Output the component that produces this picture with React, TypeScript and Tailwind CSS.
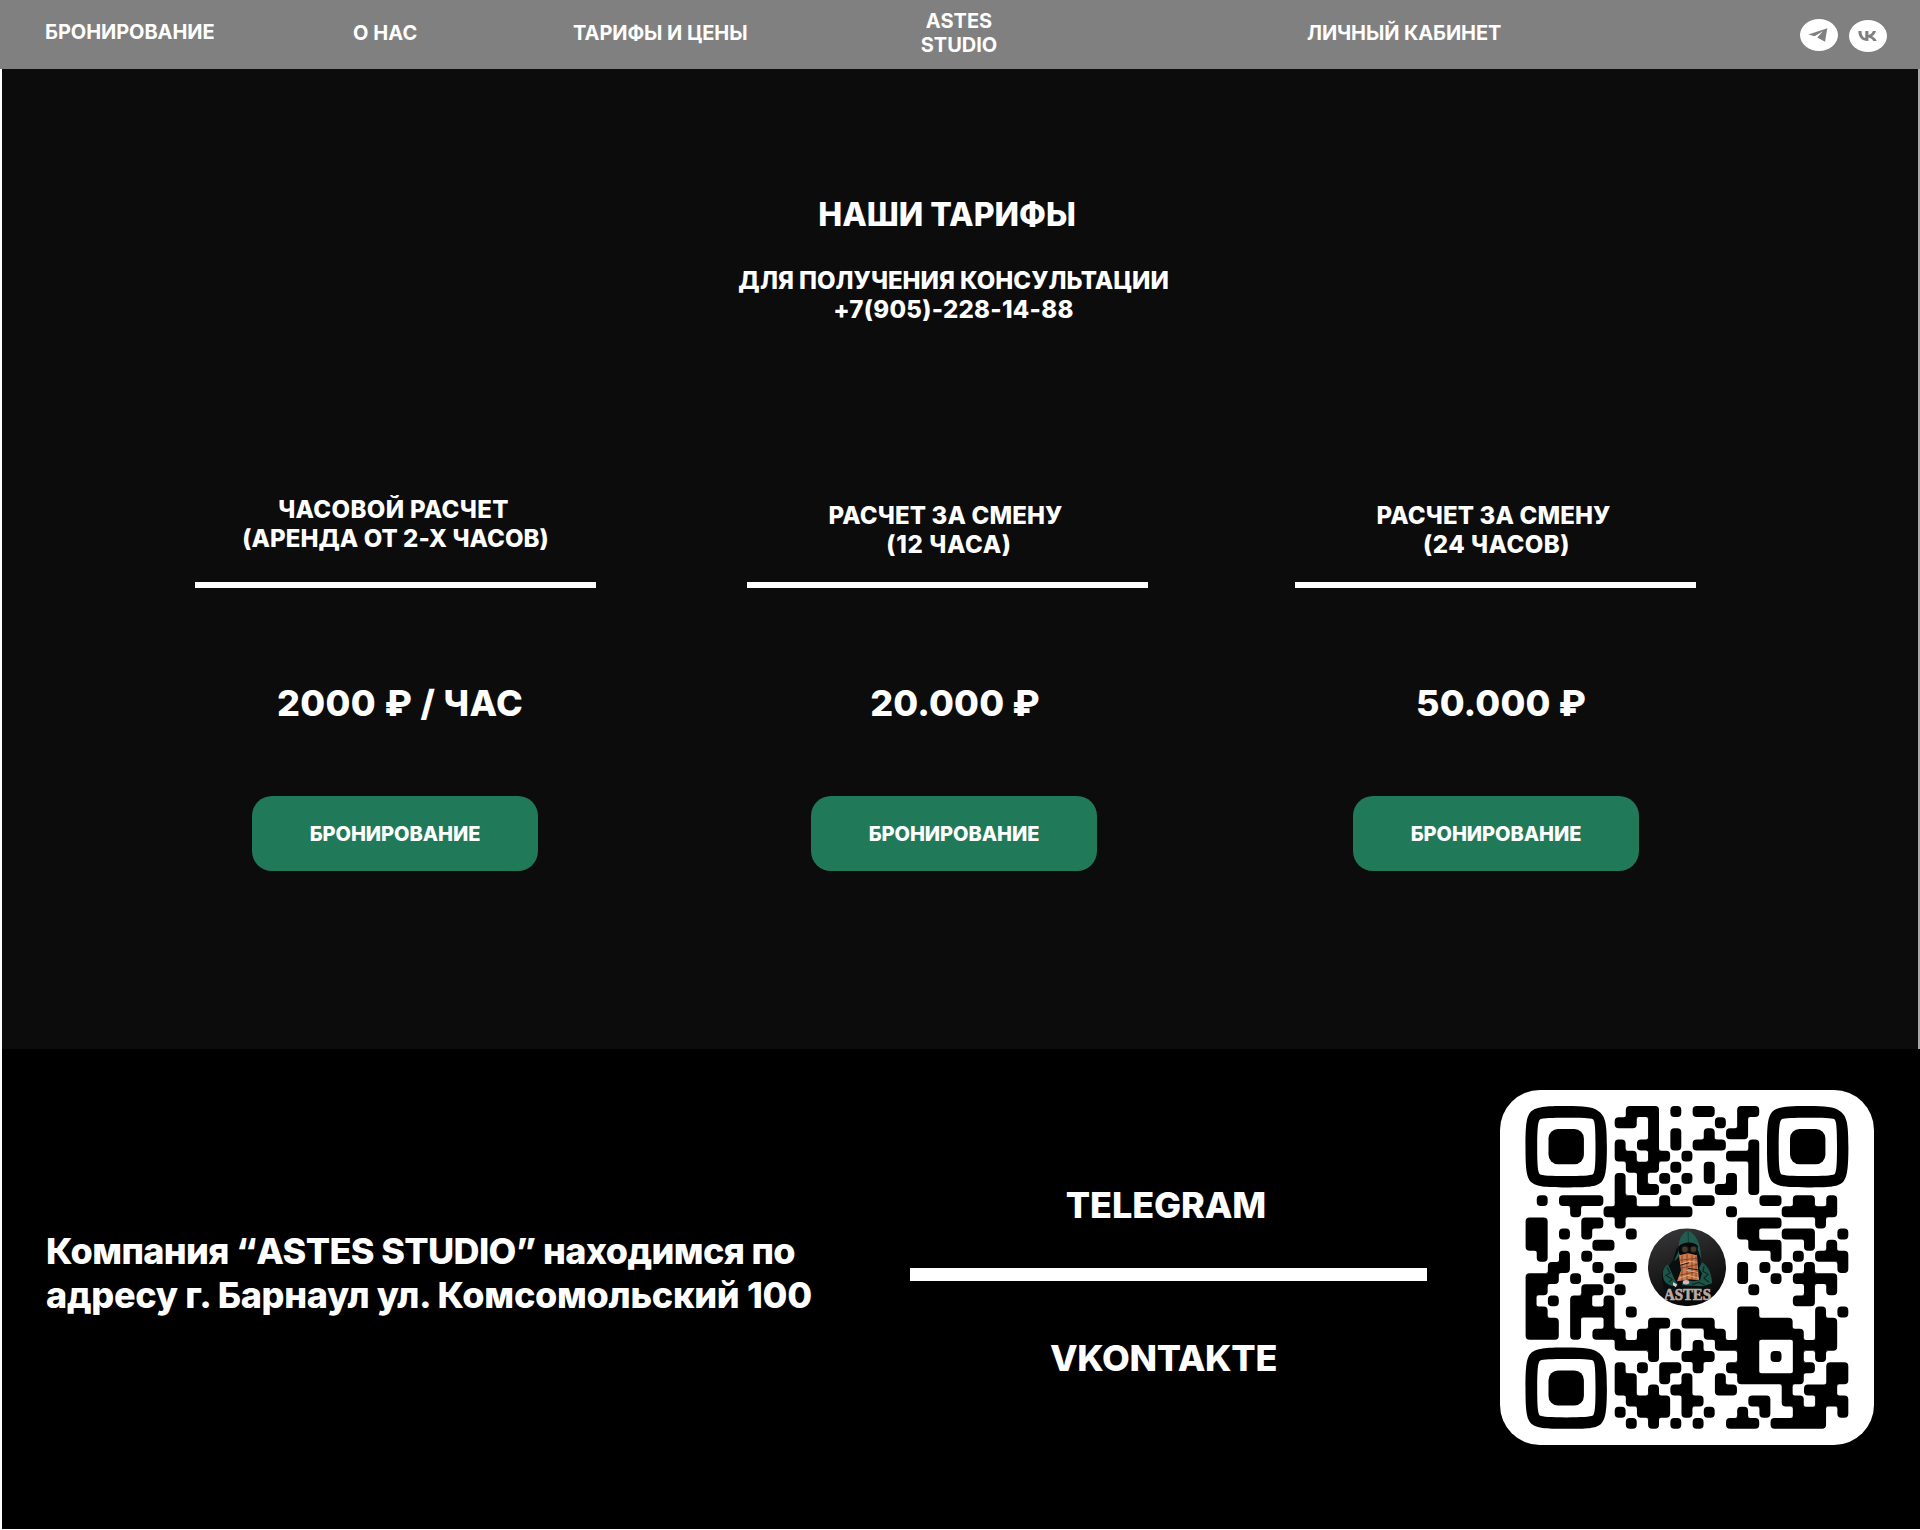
import React from "react";

const QR_ROWS: number[][] = [
  [9, 10, 11, 13, 15, 16, 19, 20],
  [8, 9, 11, 17, 19],
  [11, 13, 16, 18, 19],
  [8, 10, 11, 13, 15, 16, 17, 20],
  [8, 9, 11, 12, 14, 18, 19, 20],
  [9, 10, 11, 13, 16, 20],
  [8, 10, 12, 14, 16, 18, 20],
  [8, 10, 11, 13, 17, 18, 20],
  [1, 3, 4, 5, 6, 8, 9, 12, 15, 16, 21, 22, 24, 25, 27],
  [4, 7, 8, 9, 10, 11, 12, 13, 14, 18, 23, 24, 25, 26, 27],
  [0, 1, 5, 6, 8, 19, 20, 21, 22, 26],
  [0, 1, 3, 5, 9, 19, 20, 23, 24, 25, 28],
  [0, 1, 6, 7, 20, 21, 22, 25, 27],
  [1, 3, 5, 22, 24, 26, 27, 28],
  [2, 3, 6, 8, 9, 19, 21, 23, 25, 28],
  [0, 1, 2, 4, 7, 19, 22, 24, 25, 26, 27],
  [0, 1, 5, 6, 8, 20, 25, 27],
  [0, 2, 4, 5, 7, 24, 25],
  [0, 1, 4, 5, 6, 7, 9, 19, 20, 26, 28],
  [0, 1, 2, 4, 7, 11, 12, 14, 15, 16, 19, 20, 21, 22, 23, 26, 27],
  [0, 1, 2, 4, 6, 7, 8, 10, 11, 13, 16, 17, 19, 20, 21, 22, 23, 24, 26, 27],
  [8, 9, 10, 11, 13, 15, 17, 18, 19, 20, 24, 25, 26, 27],
  [11, 14, 15, 16, 19, 20, 22, 24, 26],
  [8, 10, 12, 13, 15, 18, 19, 20, 24, 25, 27, 28],
  [8, 9, 12, 14, 17, 19, 20, 21, 22, 23, 24, 27, 28],
  [8, 9, 11, 13, 14, 17, 18, 23, 25, 26, 27],
  [9, 10, 11, 12, 14, 15, 20, 21, 23, 24, 26, 27, 28],
  [8, 10, 11, 12, 14, 16, 19, 21, 24, 25, 26, 28],
  [9, 11, 13, 15, 18, 19, 20, 22, 23, 24, 25, 26],
];

const M = 11.135;
const on = (r: number, c: number) => !!QR_ROWS[r] && QR_ROWS[r].includes(c);

function buildModules() {
  const R = 4;
  const F = 2;
  let d = "";
  for (let r = 0; r < 29; r++) {
    for (let c = 0; c < 29; c++) {
      const x = c * M;
      const y = r * M;
      const n = on(r - 1, c);
      const s = on(r + 1, c);
      const w = on(r, c - 1);
      const e = on(r, c + 1);
      if (on(r, c)) {
        const x0 = x - (w ? 0.2 : -0.1);
        const y0 = y - (n ? 0.2 : -0.1);
        const x1 = x + M + (e ? 0.2 : -0.1);
        const y1 = y + M + (s ? 0.2 : -0.1);
        const nw = n || w ? 0 : R;
        const ne = n || e ? 0 : R;
        const se = s || e ? 0 : R;
        const sw = s || w ? 0 : R;
        d += `M${x0 + nw} ${y0}H${x1 - ne}Q${x1} ${y0} ${x1} ${y0 + ne}V${y1 - se}Q${x1} ${y1} ${x1 - se} ${y1}H${x0 + sw}Q${x0} ${y1} ${x0} ${y1 - sw}V${y0 + nw}Q${x0} ${y0} ${x0 + nw} ${y0}Z`;
      } else {
        const X = x + M;
        const Y = y + M;
        if (n && w && on(r - 1, c - 1)) d += `M${x} ${y}H${x + F}Q${x} ${y} ${x} ${y + F}Z`;
        if (n && e && on(r - 1, c + 1)) d += `M${X} ${y}V${y + F}Q${X} ${y} ${X - F} ${y}Z`;
        if (s && e && on(r + 1, c + 1)) d += `M${X} ${Y}H${X - F}Q${X} ${Y} ${X} ${Y - F}Z`;
        if (s && w && on(r + 1, c - 1)) d += `M${x} ${Y}V${Y - F}Q${x} ${Y} ${x + F} ${Y}Z`;
      }
    }
  }
  return d;
}

const MODULES = buildModules();

function Finder({ x, y }: { x: number; y: number }) {
  return (
    <g transform={`translate(${x} ${y})`}>
      <path
        fillRule="evenodd"
        d="M40.7 0C59 0 67 1 72 4.500C80 9.500 81.400 17 81.400 40.700C81.400 64 80 72 75.500 76.500C70 81 62 81.400 40.700 81.400C19 81.400 11 80.500 5.500 76C1 71 0 63 0 40.700C0 18 1 10.500 5.500 5.500C11 1 19 0 40.700 0ZM40.700 11.700C26 11.700 18 12 14.800 13.200C12.500 14.500 11.700 22 11.700 40.700C11.700 59 12.300 66 14.300 68.200C17 69.500 25 70 40.700 70C56 70 64.500 69.500 67.500 68.200C69.400 66 70 59 70 40.700C70 22 69.400 15 67.500 13.200C64.500 12 56 11.700 40.700 11.700Z"
      />
      <rect x="23" y="23" width="35.400" height="35.200" rx="9.500" />
    </g>
  );
}

function QrCode() {
  return (
    <svg className="block h-[355px] w-[374px]" viewBox="0 0 374 355">
      <g transform="translate(25.5 16)" fill="#000">
        <path d={MODULES} />
        <Finder x={0} y={0} />
        <Finder x={241.5} y={0} />
        <Finder x={0} y={241.4} />
      </g>
      <defs>
        <linearGradient id="badge" x1="0" y1="0" x2="0.3" y2="1">
          <stop offset="0" stopColor="#3a3a3c" />
          <stop offset="0.6" stopColor="#1b1b1c" />
          <stop offset="1" stopColor="#080808" />
        </linearGradient>
        <clipPath id="disc">
          <circle cx="39" cy="39" r="39" />
        </clipPath>
      </defs>
      <g transform="translate(148 138.300)" clipPath="url(#disc)">
        <rect width="78" height="78" fill="url(#badge)" />
        <path d="M30 18C26 24 27 31 22 36C16 38 13 42 14 50L16 62H64V50C62 43 58 39 52 35C53 27 52 19 50 14Z" fill="#080f10" />
        <path d="M40 2C32 6 30 14 31 22L26 33C29 31 32 27 34 22H50L53 31C53 19 51 8 40 2Z" fill="#215c50" />
        <path d="M40 2L40.500 15" stroke="#103a33" strokeWidth="0.8" />
        <path d="M20 36C14 40 14 46 16 52C19 57 25 59 30 57L26 50L23 43ZM54 34C61 38 64 47 64 55L55 58L34 57C34 53 38 51 45 53L52 52L54 45L51 40Z" fill="#1d5549" />
        <path d="M19 39L22 45L18 47L24 51L21 54M56 38L55 43L60 46L56 50L61 54M44 56L51 54L57 57" stroke="#0b2923" strokeWidth="1.200" fill="none" />
        <path d="M31 18C35 13 47 13 50 18L49 25C46 28 42 26 41 24C38 28 33 27 31 25Z" fill="#050608" />
        <circle cx="37" cy="21" r="3.300" fill="#473a26" stroke="#161719" strokeWidth="1.200" />
        <circle cx="45.500" cy="21" r="3.300" fill="#473a26" stroke="#161719" strokeWidth="1.200" />
        <path d="M31 27L40 25L49 27L50 40L51 52L42 51L29 53L33 42Z" fill="#cf7a4a" />
        <path d="M34 27V52M39 26V51M44 27V51M48 28V51M31 32L49 30M33 40L50 36M31 47L50 43" stroke="#713a25" strokeWidth="0.8" fill="none" />
        <path d="M32 36L41 33L49 34M38 42L50 44M31 50L40 47L51 50" stroke="#ddb99a" strokeWidth="0.8" fill="none" />
        <path d="M32 37L41 34.500M40 40L50 41.500" stroke="#221917" strokeWidth="1" fill="none" />
        <ellipse cx="38" cy="54" rx="3.200" ry="2.200" fill="#dfb8b5" />
        <path d="M25 54L29 56L28 59L25 57Z" fill="#e4d2cc" />
        <text x="39.500" y="72" textAnchor="middle" textLength="47" lengthAdjust="spacingAndGlyphs" fontFamily="Liberation Serif, serif" fontWeight="700" fontSize="17" fill="#b9aca5" stroke="#b9aca5" strokeWidth="0.7">
          ASTES
        </text>
      </g>
    </svg>
  );
}

function TelegramIcon() {
  return (
    <svg className="mt-[19px] ml-[299px] block h-8 w-[38px] shrink-0" viewBox="0 0 38 32">
      <ellipse cx="19" cy="16" rx="19" ry="16" fill="#fff" />
      <path d="M8.400 15.500L27.300 9.200L25 22.700L17.200 18.400L23 12.300L14.500 17.200Z" fill="#808080" />
    </svg>
  );
}

function VkIcon() {
  return (
    <svg className="mt-5 ml-[11px] block h-8 w-[38px] shrink-0" viewBox="0 0 38 32">
      <ellipse cx="19" cy="16" rx="19" ry="16" fill="#fff" />
      <path
        d="M18.700 21.100C12.800 21.100 9.500 17.400 9.300 11.100H12.500C12.600 15.700 14.500 17.700 16.300 18.100V11.100H19.400V15.100C21.300 14.900 23.200 13.100 23.900 11.100H27C26.500 13.700 24.500 15.500 23.100 16.300C24.500 17 26.700 18.500 27.800 21.100H24.300C23.500 19.100 21.700 17.600 19.400 17.400V21.100Z"
        fill="#808080"
      />
    </svg>
  );
}

type PlanProps = {
  title: { text: string; className: string }[];
  price: string;
  column: string;
  titleClass: string;
  priceClass: string;
  buttonClass: string;
};

const PLANS: PlanProps[] = [
  {
    title: [
      { text: "ЧАСОВОЙ РАСЧЕТ", className: "pr-1 tracking-[0.35px]" },
      { text: "(АРЕНДА ОТ 2-Х ЧАСОВ)", className: "tracking-[0.06px]" },
    ],
    price: "2000 ₽ / ЧАС",
    column: "ml-[193px]",
    titleClass: "",
    priceClass: "pl-[9px] tracking-[0.4px]",
    buttonClass: "ml-[57px]",
  },
  {
    title: [
      { text: "РАСЧЕТ ЗА СМЕНУ", className: "tracking-[0.15px]" },
      { text: "(12 ЧАСА)", className: "pl-[7px] tracking-[0.65px]" },
    ],
    price: "20.000 ₽",
    column: "ml-[151px]",
    titleClass: "pt-1.5 pr-1",
    priceClass: "pl-[15px] tracking-[0.15px]",
    buttonClass: "ml-16",
  },
  {
    title: [
      { text: "РАСЧЕТ ЗА СМЕНУ", className: "tracking-[0.15px]" },
      { text: "(24 ЧАСОВ)", className: "pl-[6px] tracking-[0.5px]" },
    ],
    price: "50.000 ₽",
    column: "ml-[147px]",
    titleClass: "pt-1.5 pr-1",
    priceClass: "pl-[11px] tracking-[0.15px]",
    buttonClass: "ml-[58px]",
  },
];

function Plan({ title, price, column, titleClass, priceClass, buttonClass }: PlanProps) {
  return (
    <div className={`w-[401px] shrink-0 ${column}`}>
      <div className={`h-[87px] text-center text-2xl leading-[29px] ${titleClass}`}>
        {title.map((line) => (
          <div key={line.text} className={`whitespace-nowrap ${line.className}`}>
            {line.text}
          </div>
        ))}
      </div>
      <div className="h-1.5 bg-white" />
      <div className={`mt-[93px] text-center text-4xl leading-[44px] whitespace-nowrap ${priceClass}`}>{price}</div>
      <button className={`mt-[71px] block h-[75px] w-[286px] rounded-[20px] bg-[#207a5a] text-center text-xl font-extrabold tracking-[-0.06px] text-white ${buttonClass}`}>
        БРОНИРОВАНИЕ
      </button>
    </div>
  );
}

export default function App() {
  return (
    <div className="flex h-[1530px] w-[1920px] flex-col overflow-hidden bg-white font-['Inter',sans-serif] font-extrabold text-white">
      <header className="flex h-[69px] shrink-0 bg-[#808080] text-xl leading-6 font-bold tracking-[-0.06px] whitespace-nowrap">
        <a className="mt-5 ml-[45px] w-[169px]">БРОНИРОВАНИЕ</a>
        <a className="mt-[21px] ml-[139px] w-[65px] tracking-[0.05px]">О НАС</a>
        <a className="mt-[21px] ml-[155px] w-[175px]">ТАРИФЫ И ЦЕНЫ</a>
        <div className="mt-[9px] ml-[171px] w-20 text-center tracking-normal">
          ASTES
          <br />
          STUDIO
        </div>
        <a className="mt-[21px] ml-[308px] w-[194px] tracking-[-0.1px]">ЛИЧНЫЙ КАБИНЕТ</a>
        <TelegramIcon />
        <VkIcon />
      </header>
      <div className="h-[980px] shrink-0 border-r-2 border-l-2 border-r-[#a8a8a8] border-l-white bg-[#0c0c0c]">
        <h1 className="w-[1890px] pt-[126px] text-center text-[32px] leading-10 font-extrabold">НАШИ ТАРИФЫ</h1>
        <div className="mt-[31px] w-[1903px] text-center text-2xl leading-[29px]">
          ДЛЯ ПОЛУЧЕНИЯ КОНСУЛЬТАЦИИ
          <div className="tracking-[0.29px]">+7(905)-228-14-88</div>
        </div>
        <div className="mt-[171px] flex">
          {PLANS.map((plan) => (
            <Plan key={plan.price} {...plan} />
          ))}
        </div>
      </div>
      <footer className="ml-0.5 flex h-[480px] shrink-0 bg-black text-4xl leading-[44px] whitespace-nowrap">
        <div className="mt-[180px] ml-11 w-[780px]">
          <div className="tracking-[-0.63px]">Компания “ASTES STUDIO” находимся по</div>
          <div className="tracking-[-0.3px]">адресу г. Барнаул ул. Комсомольский 100</div>
        </div>
        <div className="mt-[134px] ml-[84px] w-[517px] text-center">
          <div className="pr-[5px] tracking-[-0.1px]">TELEGRAM</div>
          <div className="mt-[41px] h-[13px] bg-white" />
          <div className="mt-[55px] pr-[10px] tracking-[-0.3px]">VKONTAKTE</div>
        </div>
        <div className="mt-[41px] ml-[73px] h-[355px] w-[374px] overflow-hidden rounded-[40px] bg-white">
          <QrCode />
        </div>
      </footer>
    </div>
  );
}
